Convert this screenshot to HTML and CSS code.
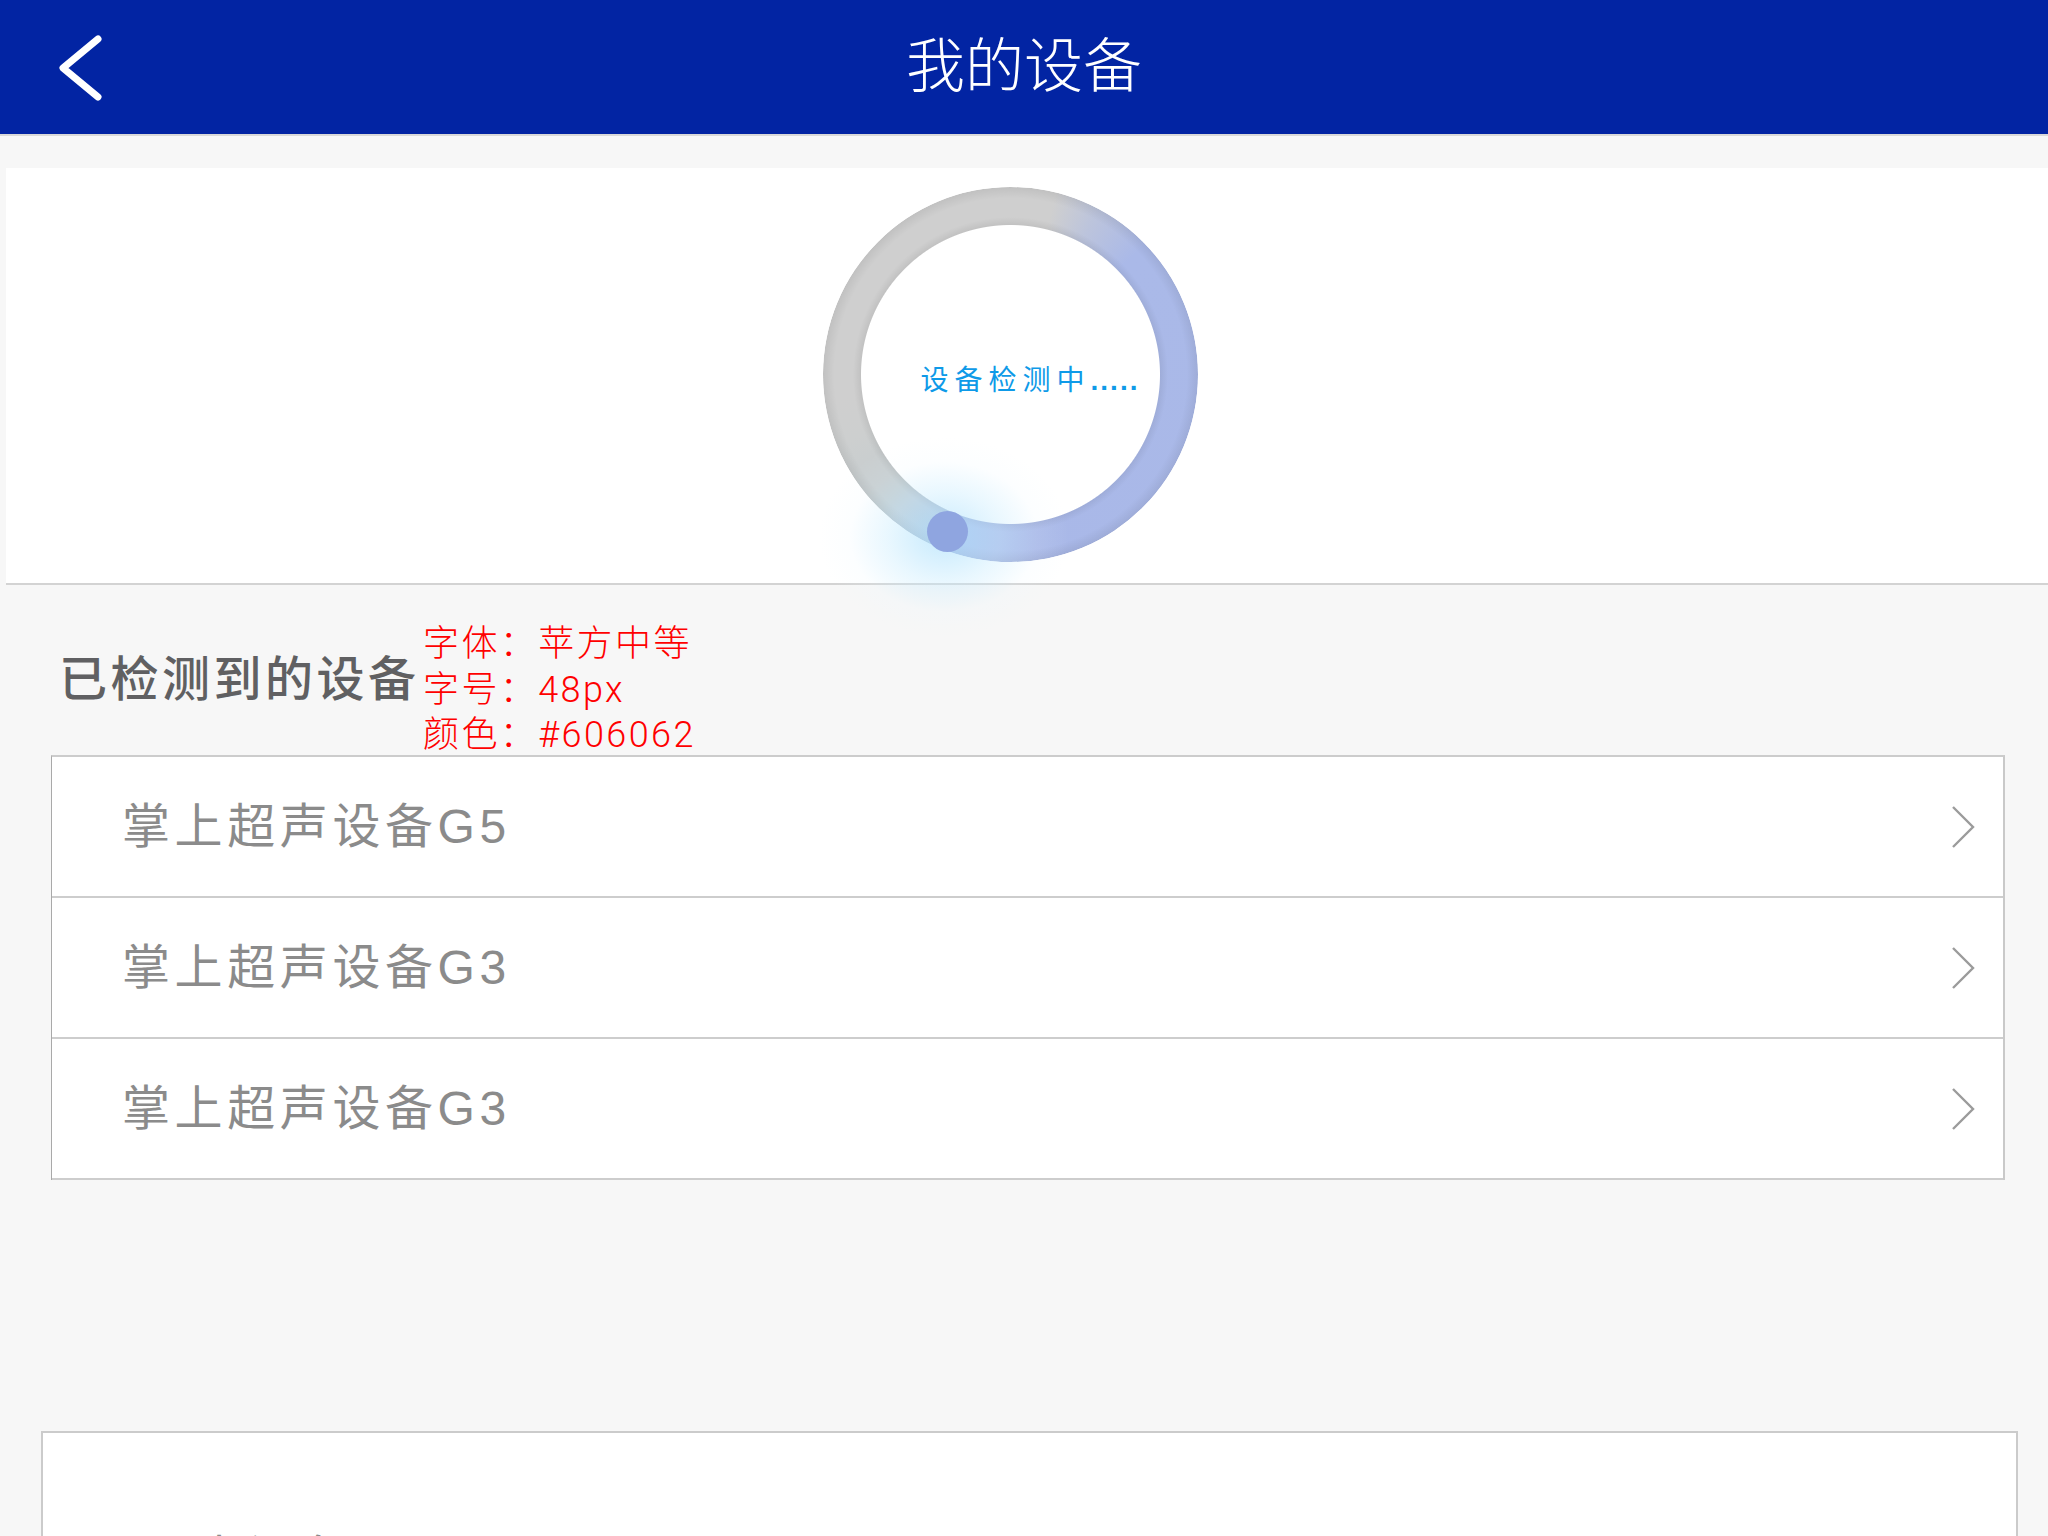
FILE: index.html
```html
<!DOCTYPE html>
<html lang="zh-CN">
<head>
<meta charset="utf-8">
<title>我的设备</title>
<link rel="stylesheet" href="styles.css">
</head>
<body>
<header class="topbar">
  <div class="topbar-left">
    <svg class="back-icon" width="48" height="74" viewBox="0 0 48 74" aria-hidden="true">
      <polyline points="42,9 7,38 42,67" fill="none" stroke="#fff" stroke-width="7" stroke-linecap="round" stroke-linejoin="round"/>
    </svg>
  </div>
  <h1 class="topbar-title">我的设备</h1>
  <div class="topbar-right"></div>
</header>

<section class="scan-panel">
  <div class="loader">
    <div class="ring"></div>
    <div class="glow"></div>
    <div class="dot"></div>
    <span class="loader-label">设备检测中<span class="dots">.....</span></span>
  </div>
</section>

<section class="found">
  <h2 class="found-title">已检测到的设备</h2>
  <div class="spec-note">
    <div>字体：苹方中等</div>
    <div>字号：48px</div>
    <div>颜色：#606062</div>
  </div>
  <ul class="device-list">
    <li class="device-row">
      <span class="device-name">掌上超声设备G5</span>
      <svg class="row-arrow" width="26" height="44" viewBox="0 0 26 44" aria-hidden="true"><polyline points="3,2 23,22 3,42" fill="none" stroke="#9b9b9b" stroke-width="2.4"/></svg>
    </li>
    <li class="device-row">
      <span class="device-name">掌上超声设备G3</span>
      <svg class="row-arrow" width="26" height="44" viewBox="0 0 26 44" aria-hidden="true"><polyline points="3,2 23,22 3,42" fill="none" stroke="#9b9b9b" stroke-width="2.4"/></svg>
    </li>
    <li class="device-row">
      <span class="device-name">掌上超声设备G3</span>
      <svg class="row-arrow" width="26" height="44" viewBox="0 0 26 44" aria-hidden="true"><polyline points="3,2 23,22 3,42" fill="none" stroke="#9b9b9b" stroke-width="2.4"/></svg>
    </li>
  </ul>
</section>

<section class="bottom-card">
  <div class="bottom-label">历史设备</div>
</section>
</body>
</html>
```

FILE: styles.css
```css
* { box-sizing: border-box; }

html, body {
  margin: 0;
  padding: 0;
}

body {
  width: 2048px;
  height: 1536px;
  overflow: hidden;
  background: #f7f7f7;
  font-family: "Liberation Sans", "Noto Sans CJK SC", sans-serif;
}

/* ---------- header ---------- */
.topbar {
  height: 136px;
  background: #0224a3;
  border-bottom: 2px solid #d9d9d9;
  display: grid;
  grid-template-columns: 1fr auto 1fr;
  align-items: center;
}

.topbar-left {
  padding-left: 56px;
  display: flex;
  align-items: center;
}

.back-icon { display: block; }

.topbar-title {
  margin: 0;
  color: #ffffff;
  font-size: 59px;
  font-weight: 300;
  line-height: 132px;
  letter-spacing: 0;
}

/* ---------- scanning panel ---------- */
.scan-panel {
  margin: 32px 0 0 6px;
  background: #ffffff;
  border-bottom: 2px solid #d3d3d3;
  padding: 19px 34px 21px 0;
  display: flex;
  justify-content: center;
}

.loader {
  position: relative;
  width: 375px;
  height: 375px;
  display: flex;
  align-items: center;
  justify-content: center;
  padding: 13px 0 0 40px;
}

.ring {
  position: absolute;
  inset: 0;
  border-radius: 50%;
  background:
    radial-gradient(closest-side,
      rgba(0,0,0,0.07) 79.5%,
      rgba(0,0,0,0) 84%,
      rgba(0,0,0,0) 94%,
      rgba(0,0,0,0.07) 100%),
    conic-gradient(
      #cfcfcf 0deg,
      #cfcfcf 14deg,
      #bcc4dc 28deg,
      #aab9e8 46deg,
      #a9b8e8 198deg,
      #b6c4dc 206deg,
      #c4cccf 224deg,
      #cdcfcf 248deg,
      #cfcfcf 262deg,
      #cfcfcf 360deg);
  -webkit-mask: radial-gradient(closest-side, transparent 149px, #000 150px);
  mask: radial-gradient(closest-side, transparent 149px, #000 150px);
}

.glow {
  position: absolute;
  left: -4px;
  top: 250px;
  width: 250px;
  height: 200px;
  border-radius: 50%;
  background: radial-gradient(closest-side,
    rgba(175, 225, 252, 0.7) 0%,
    rgba(200, 236, 254, 0.4) 45%,
    rgba(230, 246, 255, 0.12) 75%,
    rgba(255, 255, 255, 0) 100%);
}

.dot {
  position: absolute;
  left: 104px;
  top: 324px;
  width: 41px;
  height: 41px;
  border-radius: 50%;
  background: #8fa5e0;
}

.loader-label {
  position: relative;
  color: #0e9ae8;
  font-size: 28px;
  letter-spacing: 6px;
  line-height: 40px;
  white-space: nowrap;
}

.loader-label .dots {
  letter-spacing: 2px;
  font-weight: 700;
}

/* ---------- found devices ---------- */
.found {
  position: relative;
  padding: 65px 0 0 0;
}

.found-title {
  margin: 0 0 0 59px;
  font-size: 48px;
  font-weight: 500;
  line-height: 60px;
  letter-spacing: 3.5px;
  color: #606062;
}

.spec-note {
  position: absolute;
  left: 423px;
  top: 37px;
  color: #ff0000;
  font-family: "Roboto", "Noto Sans CJK SC", sans-serif;
  font-size: 36px;
  font-weight: 300;
  line-height: 45.5px;
  letter-spacing: 2.4px;
  white-space: nowrap;
}

.device-list {
  list-style: none;
  margin: 45px 43px 0 51px;
  padding: 0;
  background: #ffffff;
  border-top: 2px solid #cccccc;
  border-left: 1px solid #a9a9a9;
  border-right: 2px solid #c9c9c9;
}

.device-row {
  height: 141px;
  border-bottom: 2px solid #cdcdcd;
  display: flex;
  align-items: center;
  justify-content: space-between;
  padding: 0 27px 0 70px;
}

.device-name {
  font-size: 48px;
  color: #8b8b8b;
  letter-spacing: 4.6px;
  line-height: 60px;
}

.row-arrow { display: block; }

/* ---------- bottom card ---------- */
.bottom-card {
  margin: 251px 30px 0 41px;
  height: 260px;
  background: #ffffff;
  border: 2px solid #cbcbcb;
  padding: 96px 0 0 100px;
}

.bottom-label {
  font-size: 48px;
  line-height: 60px;
  color: #8b8b8b;
  letter-spacing: 4px;
}
```
